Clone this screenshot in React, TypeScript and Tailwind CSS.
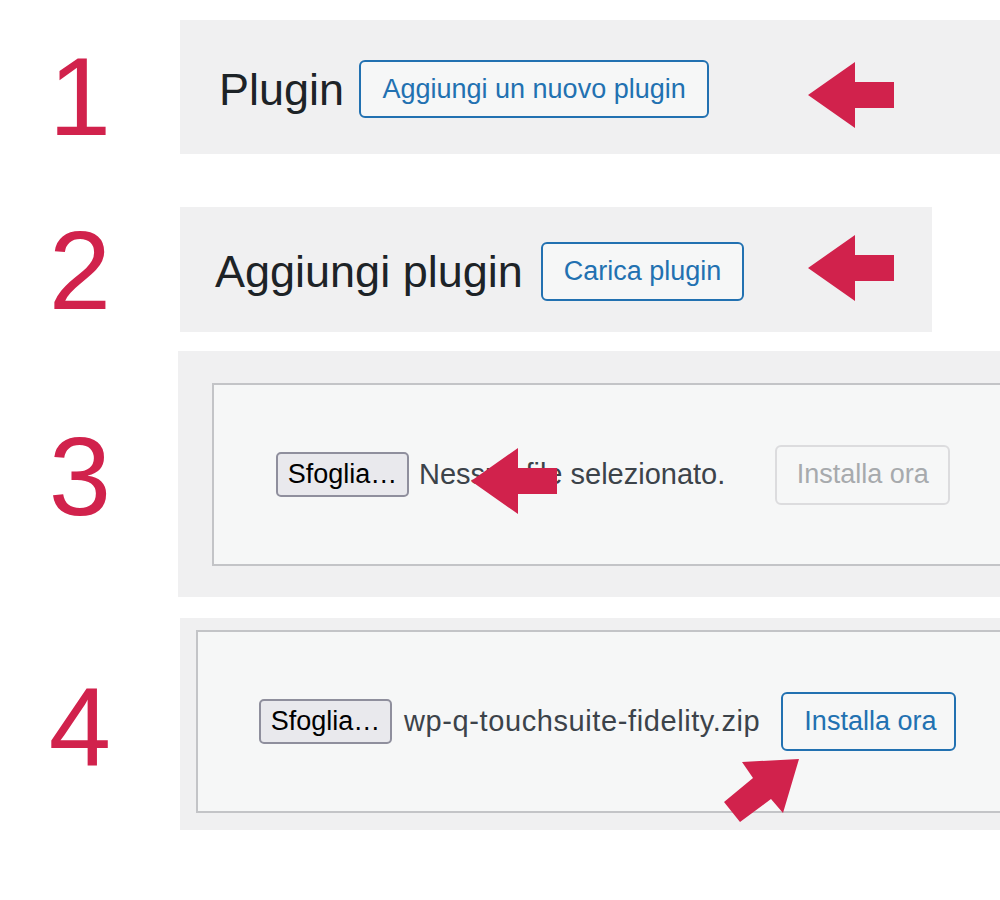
import React from "react";

const RED = "#d1224c";

// Solid left-pointing arrow: triangular head with a short rectangular shaft.
function LeftArrow({ className }: { className: string }) {
  return (
    <svg className={className} width="86" height="66" viewBox="0 0 86 66">
      <polygon points="0,33 47,0 47,20 86,20 86,46 47,46 47,66" fill={RED} />
    </svg>
  );
}

// Arrow pointing up and to the right, towards the install button.
function UpRightArrow({ className }: { className: string }) {
  return (
    <svg className={className} width="90" height="80" viewBox="715 750 90 80">
      <polygon
        points="799,759 742,762 753,778 724,802 740,822 771,799 783,813"
        fill={RED}
      />
    </svg>
  );
}

function StepNumber({ n, offset }: { n: string; offset: string }) {
  return (
    <div className={`w-[160px] shrink-0 flex justify-center items-center ${offset}`}>
      <span className="text-[112px] leading-none text-[#d1224c]">{n}</span>
    </div>
  );
}

function OutlineButton({ label, className = "" }: { label: string; className?: string }) {
  return (
    <button
      className={`h-[58px] px-[21px] border-2 border-[#2271b1] rounded-[6px] bg-[#f6f7f7] text-[#2271b1] text-[27px] leading-none whitespace-nowrap ${className}`}
    >
      {label}
    </button>
  );
}

function BrowseButton() {
  return (
    <button className="h-[45px] w-[133px] border-2 border-[#8f8f9d] rounded-[5px] bg-[#e9e9ed] text-black text-[27px] leading-none whitespace-nowrap">
      Sfoglia…
    </button>
  );
}

export default function App() {
  return (
    <div className="relative w-[1000px] h-[900px] bg-white overflow-hidden font-['Liberation_Sans',Arial,sans-serif]">
      <div className="flex flex-col pt-[20px]">
        {/* 1 — plugin list header */}
        <div className="flex h-[134px]">
          <StepNumber n="1" offset="pt-[20px]" />
          <div className="ml-[20px] flex-1 bg-[#f0f0f1] flex items-center pl-[39px] pt-[4px]">
            <h1 className="text-[45px] leading-none text-[#1d2327]">Plugin</h1>
            <OutlineButton label="Aggiungi un nuovo plugin" className="ml-[15px] w-[350px] px-0" />
          </div>
        </div>

        {/* 2 — add plugin header */}
        <div className="flex h-[125px] mt-[53px]">
          <StepNumber n="2" offset="pt-[2px]" />
          <div className="ml-[20px] w-[752px] bg-[#f0f0f1] flex items-center pl-[35px] pt-[4px]">
            <h1 className="text-[45px] leading-none text-[#1d2327] whitespace-nowrap">Aggiungi plugin</h1>
            <OutlineButton label="Carica plugin" className="ml-[18px] h-[59px]" />
          </div>
        </div>

        {/* 3 — empty upload form */}
        <div className="flex h-[246px] mt-[19px]">
          <StepNumber n="3" offset="pt-[6px]" />
          <div className="ml-[18px] flex-1 bg-[#f0f0f1] pl-[34px] pt-[32px] overflow-hidden">
            <div className="h-[183px] w-[900px] border-2 border-[#c3c4c7] bg-[#f6f7f7] flex items-center pl-[62px]">
              <BrowseButton />
              <span className="ml-[10px] text-[29px] leading-none text-[#3c434a] whitespace-nowrap">
                Nessun file selezionato.
              </span>
              <button className="ml-[50px] h-[60px] w-[175px] border-2 border-[#dcdcde] rounded-[6px] bg-[#f6f7f7] text-[#a7aaad] text-[27px] leading-none whitespace-nowrap">
                Installa ora
              </button>
            </div>
          </div>
        </div>

        {/* 4 — file chosen, ready to install */}
        <div className="flex h-[212px] mt-[21px]">
          <StepNumber n="4" offset="pt-[6px]" />
          <div className="ml-[20px] flex-1 bg-[#f0f0f1] pl-[16px] pt-[12px] overflow-hidden">
            <div className="h-[183px] w-[900px] border-2 border-[#c3c4c7] bg-[#f6f7f7] flex items-center pl-[61px]">
              <BrowseButton />
              <span className="ml-[12px] text-[29px] tracking-[0.6px] leading-none text-[#3c434a] whitespace-nowrap">
                wp-q-touchsuite-fidelity.zip
              </span>
              <OutlineButton label="Installa ora" className="ml-[21px] w-[175px] h-[59px] px-0" />
            </div>
          </div>
        </div>
      </div>

      {/* pointer arrows */}
      <LeftArrow className="absolute left-[808px] top-[62px]" />
      <LeftArrow className="absolute left-[808px] top-[235px]" />
      <LeftArrow className="absolute left-[471px] top-[448px]" />
      <UpRightArrow className="absolute left-[715px] top-[750px]" />
    </div>
  );
}
